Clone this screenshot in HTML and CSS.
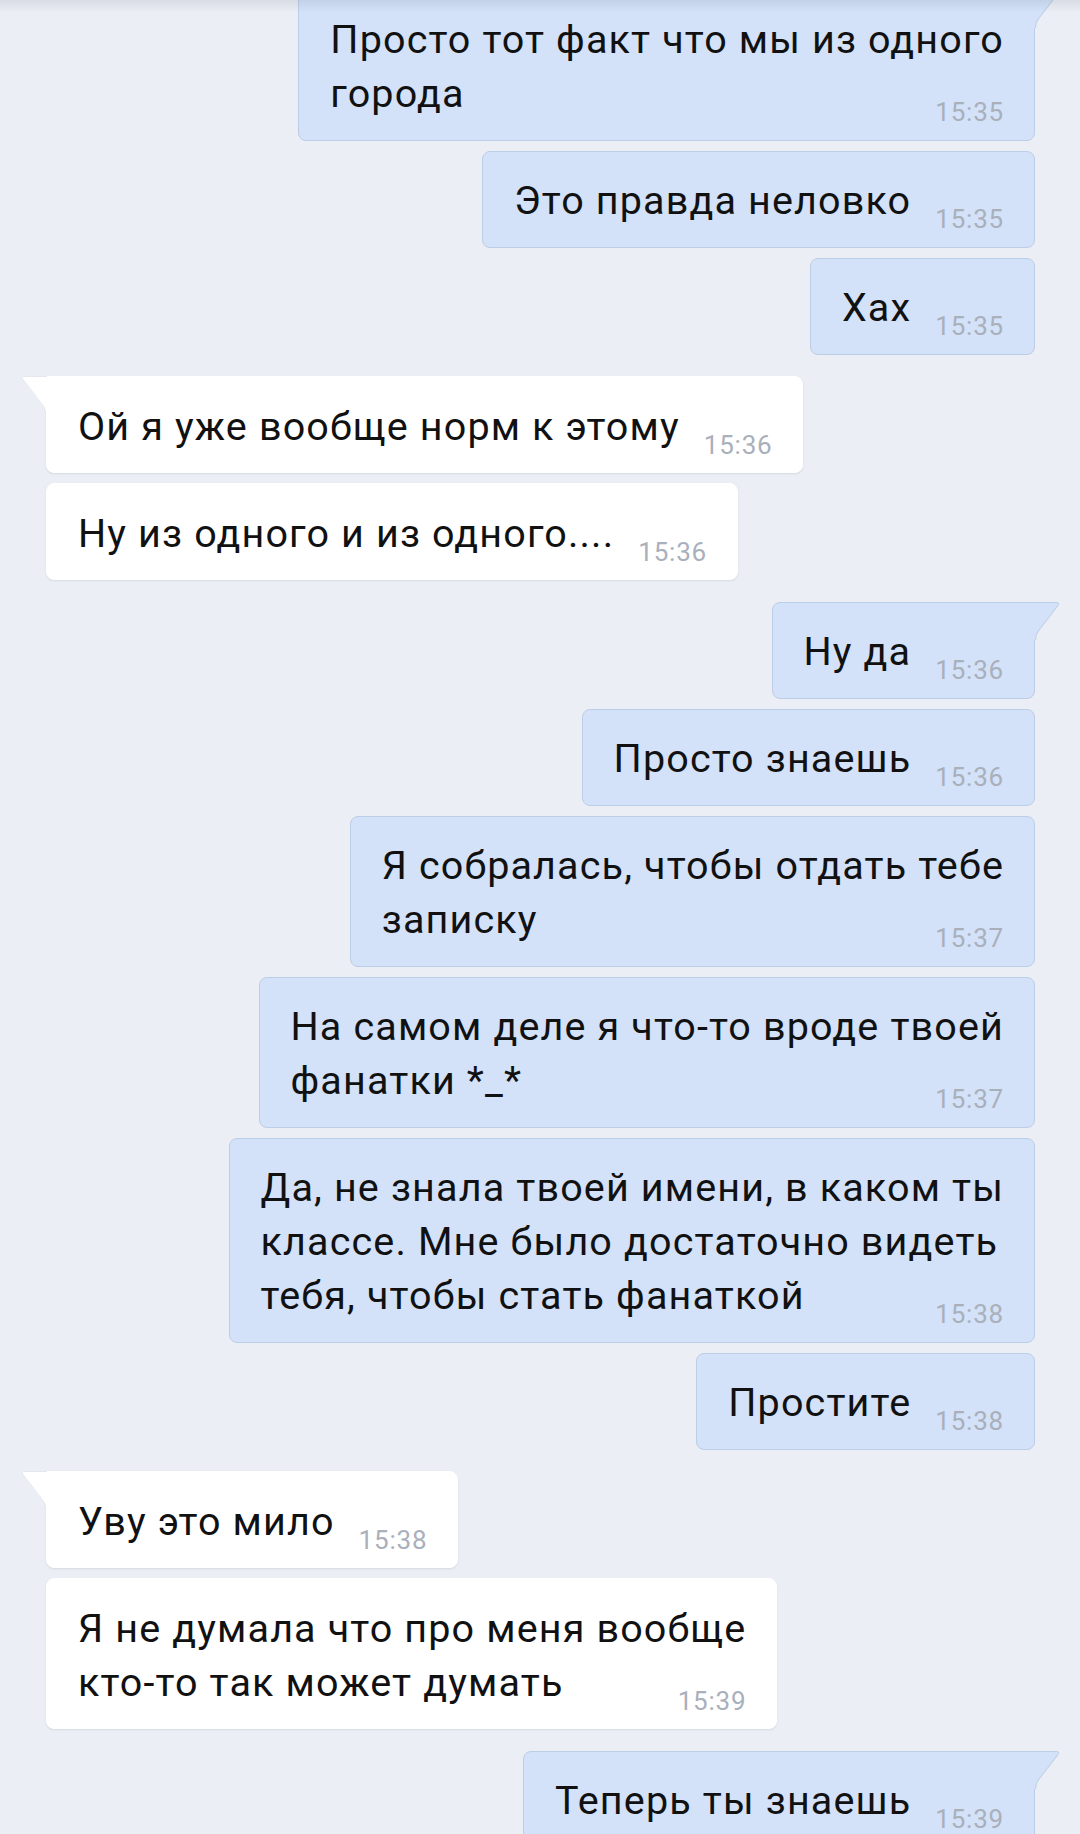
FILE: index.html
```html
<!DOCTYPE html>
<html lang="ru">
<head>
  <meta charset="UTF-8" />
  <meta name="viewport" content="width=device-width, initial-scale=1.0" />
  <title>Диалог</title>
  <link rel="stylesheet" href="styles.css">
</head>
<body>
  <div class="top-shade"></div>
  <div class="chat">

    <!-- outgoing -->
    <div class="group out">
      <div class="bubble">
        <svg class="tail" viewBox="0 0 27 38" width="27" height="38"><path class="tail-fill" d="M0 0 H22 Q27 0 24 4 L5 29 Q1 33 1 38 H0 Z"/><path class="tail-line" d="M0 0.5 H22 Q26.5 0.5 23.6 4 L4.6 28.6 Q1.5 32.5 1.5 38"/></svg>
        <div class="text">Просто тот факт что мы из одного</div>
        <div class="last"><span>города</span><span class="time">15:35</span></div>
      </div>
      <div class="bubble">
        <div class="last"><span>Это правда неловко</span><span class="time">15:35</span></div>
      </div>
      <div class="bubble">
        <div class="last"><span>Хах</span><span class="time">15:35</span></div>
      </div>
    </div>

    <!-- incoming -->
    <div class="group in">
      <div class="bubble">
        <svg class="tail" viewBox="0 0 27 38" width="27" height="38"><path class="tail-fill" d="M27 0 H5 Q0 0 3 4 L22 29 Q26 33 26 38 H27 Z"/><path class="tail-line" d="M27 0.5 H5 Q0.5 0.5 3.4 4 L22.4 28.6 Q25.5 32.5 25.5 38"/></svg>
        <div class="last"><span>Ой я уже вообще норм к этому</span><span class="time">15:36</span></div>
      </div>
      <div class="bubble">
        <div class="last"><span>Ну из одного и из одного....</span><span class="time">15:36</span></div>
      </div>
    </div>

    <!-- outgoing -->
    <div class="group out">
      <div class="bubble">
        <svg class="tail" viewBox="0 0 27 38" width="27" height="38"><path class="tail-fill" d="M0 0 H22 Q27 0 24 4 L5 29 Q1 33 1 38 H0 Z"/><path class="tail-line" d="M0 0.5 H22 Q26.5 0.5 23.6 4 L4.6 28.6 Q1.5 32.5 1.5 38"/></svg>
        <div class="last"><span>Ну да</span><span class="time">15:36</span></div>
      </div>
      <div class="bubble">
        <div class="last"><span>Просто знаешь</span><span class="time">15:36</span></div>
      </div>
      <div class="bubble">
        <div class="text">Я собралась, чтобы отдать тебе</div>
        <div class="last"><span>записку</span><span class="time">15:37</span></div>
      </div>
      <div class="bubble">
        <div class="text">На самом деле я что-то вроде твоей</div>
        <div class="last"><span>фанатки *_*</span><span class="time">15:37</span></div>
      </div>
      <div class="bubble">
        <div class="text">Да, не знала твоей имени, в каком ты<br>классе. Мне было достаточно видеть</div>
        <div class="last"><span>тебя, чтобы стать фанаткой</span><span class="time">15:38</span></div>
      </div>
      <div class="bubble">
        <div class="last"><span>Простите</span><span class="time">15:38</span></div>
      </div>
    </div>

    <!-- incoming -->
    <div class="group in">
      <div class="bubble">
        <svg class="tail" viewBox="0 0 27 38" width="27" height="38"><path class="tail-fill" d="M27 0 H5 Q0 0 3 4 L22 29 Q26 33 26 38 H27 Z"/><path class="tail-line" d="M27 0.5 H5 Q0.5 0.5 3.4 4 L22.4 28.6 Q25.5 32.5 25.5 38"/></svg>
        <div class="last"><span>Уву это мило</span><span class="time">15:38</span></div>
      </div>
      <div class="bubble">
        <div class="text">Я не думала что про меня вообще</div>
        <div class="last"><span>кто-то так может думать</span><span class="time">15:39</span></div>
      </div>
    </div>

    <!-- outgoing -->
    <div class="group out">
      <div class="bubble">
        <svg class="tail" viewBox="0 0 27 38" width="27" height="38"><path class="tail-fill" d="M0 0 H22 Q27 0 24 4 L5 29 Q1 33 1 38 H0 Z"/><path class="tail-line" d="M0 0.5 H22 Q26.5 0.5 23.6 4 L4.6 28.6 Q1.5 32.5 1.5 38"/></svg>
        <div class="last"><span>Теперь ты знаешь</span><span class="time">15:39</span></div>
      </div>
    </div>

  </div>
</body>
</html>
```

FILE: styles.css
```css
/* Reset & Base */
* {
  margin: 0;
  padding: 0;
  box-sizing: border-box;
}

body {
  background-color: #ebeef4;
  color: #111111;
  font-family: Roboto, "Noto Sans", sans-serif;
  overflow: hidden;
}

/* soft shadow under the (cut off) header */
.top-shade {
  position: fixed;
  top: 0;
  left: 0;
  right: 0;
  height: 12px;
  background: linear-gradient(rgba(60, 70, 90, 0.10), rgba(60, 70, 90, 0));
  z-index: 5;
}

.chat {
  display: flex;
  flex-direction: column;
  gap: 21.5px;
  padding: 0 45px 0 46px;
  margin-top: -10.5px;
}

.group {
  display: flex;
  flex-direction: column;
  gap: 10px;
}

.group.out { align-items: flex-end; }
.group.in { align-items: flex-start; }

.bubble {
  position: relative;
  padding: 22.5px 30px 18.5px 31px;
  border-radius: 8px;
  font-size: 39.5px;
  line-height: 54px;
  letter-spacing: 1.15px;
  white-space: nowrap;
}

.out .bubble {
  background-color: #d3e2f8;
  border: 1px solid #bccde6;
}

.in .bubble {
  background-color: #ffffff;
  border: 1px solid #ffffff;
  box-shadow: 0 1px 2px rgba(40, 60, 90, 0.10);
}

.last {
  display: flex;
  justify-content: space-between;
  gap: 24px;
}

.time {
  align-self: flex-end;
  font-size: 26px;
  line-height: 17px;
  letter-spacing: 0.8px;
  color: #a9b0bb;
}

/* Bubble tails */
.tail {
  position: absolute;
  top: -1px;
  display: block;
}

.out .bubble:has(.tail) { border-top-right-radius: 0; }
.in .bubble:has(.tail) { border-top-left-radius: 0; }

.out .tail { right: -27px; }
.in .tail { left: -27px; }

.out .tail-fill { fill: #d3e2f8; }
.out .tail-line { fill: none; stroke: #bccde6; stroke-width: 1; }

.in .tail-fill { fill: #ffffff; }
.in .tail-line { fill: none; stroke: #e4e8ee; stroke-width: 1; }
```
